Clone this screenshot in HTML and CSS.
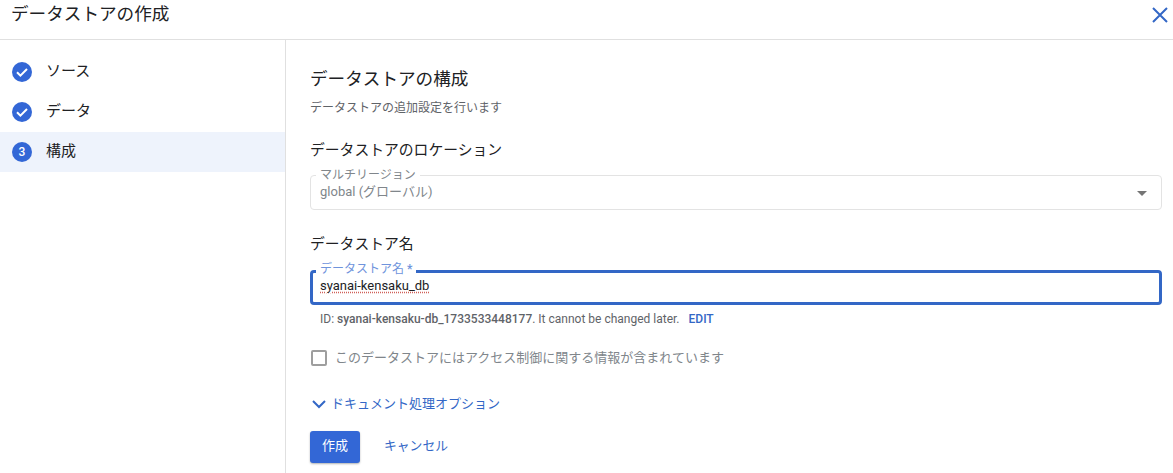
FILE: index.html
```html
<!DOCTYPE html>
<html lang="ja">
<head>
  <meta charset="UTF-8" />
  <title>データストアの作成</title>
  <link rel="stylesheet" href="styles.css">
</head>
<body>
  <header class="topbar">
    <h1>データストアの作成</h1>
    <svg class="close" width="24" height="24" viewBox="0 0 24 24"><path d="M5 5l14 14M19 5L5 19" fill="none" stroke="#3367c6" stroke-width="2"/></svg>
  </header>
  <div class="layout">
    <nav class="steps">
      <div class="step">
        <svg class="step-icon" width="20" height="20" viewBox="0 0 20 20"><circle cx="10" cy="10" r="10" fill="#3367d6"/><path d="M5 10.3l3.4 3.4L15 7" fill="none" stroke="#fff" stroke-width="2"/></svg>
        <span>ソース</span>
      </div>
      <div class="step">
        <svg class="step-icon" width="20" height="20" viewBox="0 0 20 20"><circle cx="10" cy="10" r="10" fill="#3367d6"/><path d="M5 10.3l3.4 3.4L15 7" fill="none" stroke="#fff" stroke-width="2"/></svg>
        <span>データ</span>
      </div>
      <div class="step active">
        <div class="step-num">3</div>
        <span>構成</span>
      </div>
    </nav>
    <main class="content">
      <h2>データストアの構成</h2>
      <p class="sub">データストアの追加設定を行います</p>
      <h3 class="location-title">データストアのロケーション</h3>
      <div class="field select">
        <label>マルチリージョン</label>
        <span>global (グローバル)</span>
        <div class="arrow"></div>
      </div>
      <h3 class="name-title">データストア名</h3>
      <div class="field focused">
        <label>データストア名 <b>*</b></label>
        <span class="typed">syanai-kensaku_db</span>
      </div>
      <p class="hint">ID: <b>syanai-kensaku-db_1733533448177</b>. It cannot be changed later.<a class="edit">EDIT</a></p>
      <div class="check-row">
        <div class="checkbox"></div>
        <span>このデータストアにはアクセス制御に関する情報が含まれています</span>
      </div>
      <div class="expander">
        <svg width="16" height="16" viewBox="0 0 16 16"><path d="M2 5l6 6 6-6" fill="none" stroke="#3367c6" stroke-width="2"/></svg>
        <span>ドキュメント処理オプション</span>
      </div>
      <div class="actions">
        <button class="primary">作成</button>
        <button class="cancel">キャンセル</button>
      </div>
    </main>
  </div>
</body>
</html>
```

FILE: styles.css
```css
* {
  box-sizing: border-box;
}
html, body {
  height: 100%;
}
body {
  margin: 0;
  overflow: hidden;
  background: #fff;
  color: #202124;
  font-family: Roboto, "Noto Sans CJK JP", sans-serif;
}
.topbar {
  height: 40px;
  display: flex;
  justify-content: space-between;
  padding: 0 1px 0 11px;
  border-bottom: 1px solid #e0e0e0;
}
.topbar h1 {
  margin: 0;
  font-size: 17.6px;
  font-weight: 400;
  line-height: 28px;
}
.close {
  margin-top: 3px;
}
.layout {
  display: flex;
  height: 433px;
}
.steps {
  width: 286px;
  padding-top: 12px;
  border-right: 1px solid #e0e0e0;
}
.step {
  height: 40px;
  display: flex;
  align-items: center;
  gap: 14px;
  padding-left: 12px;
  font-size: 15px;
}
.step span {
  margin-bottom: 5px;
}
.step.active {
  background: #eef3fc;
}
.step-num {
  width: 20px;
  height: 20px;
  border-radius: 50%;
  background: #3367d6;
  color: #fff;
  font-size: 12px;
  font-weight: 500;
  line-height: 20px;
  text-align: center;
}
.content {
  flex: 1;
  padding: 27px 11px 0 24px;
}
h2 {
  margin: 0;
  font-size: 17.6px;
  font-weight: 400;
  line-height: 24px;
}
.sub {
  margin: 8px 0 0;
  color: #5f6368;
  font-size: 12px;
  line-height: 18px;
}
h3 {
  margin: 0;
  font-size: 14.8px;
  font-weight: 400;
  line-height: 20px;
}
.location-title {
  margin-top: 23px;
}
.name-title {
  margin-top: 24px;
}
.field {
  position: relative;
  height: 35px;
  padding: 7px 9px 0;
  border: 1px solid #e3e3e3;
  border-radius: 4px;
  color: #80868b;
  font-size: 13px;
  line-height: 18px;
}
.select {
  margin-top: 15px;
}
.field label {
  position: absolute;
  left: 5px;
  top: -8px;
  padding: 0 4px;
  background: #fff;
  font-size: 12px;
  line-height: 14px;
}
.arrow {
  position: absolute;
  right: 14px;
  top: 15px;
  border: 5px solid transparent;
  border-top-color: #757575;
  border-bottom: 0;
}
.focused {
  margin-top: 16px;
  padding: 4px 7px 0;
  border: 3px solid #3367c6;
  color: #202124;
}
.focused label {
  left: 3px;
  top: -11px;
  color: #6f94dc;
}
.typed {
  text-decoration: underline dotted #d0605a;
  text-underline-offset: 2px;
}
.hint {
  margin: 5px 0 0 10px;
  color: #5f6368;
  font-size: 12px;
  line-height: 18px;
}
.hint b {
  font-weight: 500;
}
.edit {
  margin-left: 9px;
  color: #3367c6;
  font-weight: 500;
}
.check-row {
  display: flex;
  align-items: center;
  gap: 9px;
  margin-top: 20px;
  color: #80868b;
  font-size: 13px;
  line-height: 20px;
}
.check-row span {
  margin-left: -1px;
}
.checkbox {
  width: 16px;
  height: 16px;
  margin-left: 1px;
  border: 2px solid #9e9e9e;
  border-radius: 2px;
}
.expander {
  display: flex;
  align-items: center;
  gap: 4px;
  margin-top: 26px;
  padding-left: 1px;
  color: #3367c6;
  font-size: 13px;
  line-height: 20px;
}
.actions {
  display: flex;
  align-items: center;
  gap: 12px;
  margin-top: 17px;
}
button {
  height: 32px;
  padding-bottom: 6px;
  border: 0;
  border-radius: 3px;
  background: none;
  font-family: inherit;
  font-size: 13px;
}
.primary {
  width: 50px;
  background: #3367d6;
  color: #fff;
  box-shadow: 0 1px 2px rgba(60, 64, 67, 0.4);
}
.cancel {
  padding-left: 12px;
  padding-right: 12px;
  color: #3367c6;
  font-size: 12.8px;
}
```
